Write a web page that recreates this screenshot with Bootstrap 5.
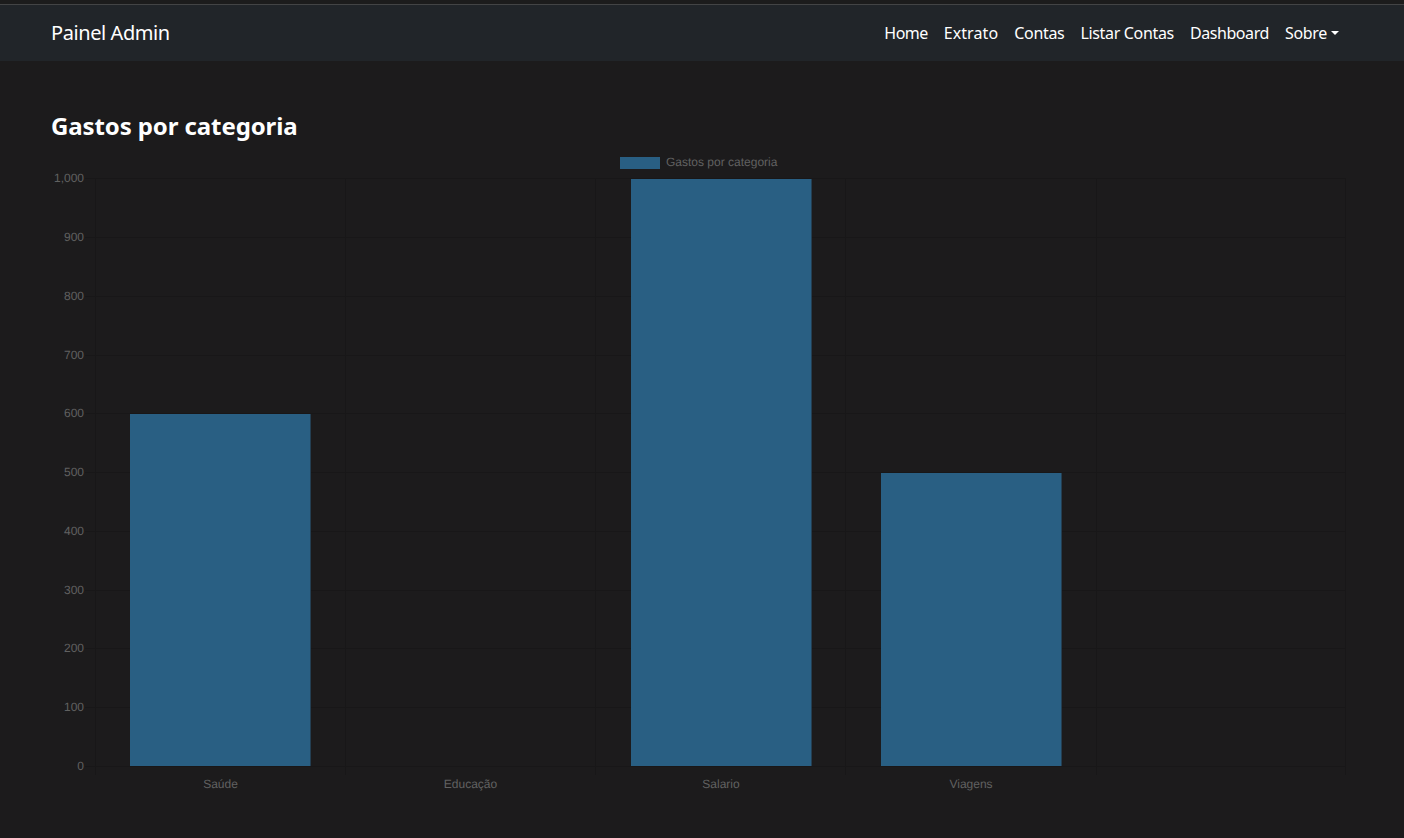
<!DOCTYPE html>
<html lang="pt-BR">
<head>
<meta charset="utf-8">
<title>Painel Admin</title>
<link rel="stylesheet" href="https://cdn.jsdelivr.net/npm/bootstrap@5.3.0/dist/css/bootstrap.min.css">
<style>
html, body { height: 100%; }
body { background: #1c1b1c; font-family: "Noto Sans", sans-serif; overflow: hidden; }
.top-strip { height: 5px; background: #1c1c1c; border-bottom: 1px solid #434445; }
.admin-bar { height: 56px; padding: 0 51px; background: #212529; }
.admin-bar .container-fluid { padding: 0; }
.admin-bar .navbar-brand { font-size: 20px; letter-spacing: -.42px; color: #fff; margin: 0; }
.admin-bar .navbar-nav { margin-right: 6px; }
.admin-bar .nav-link { color: #fff; font-size: 16px; letter-spacing: -.33px; }
.admin-bar .nav-link.tight-label { letter-spacing: -.55px; }
.admin-bar .nav-link.wide-label { letter-spacing: .1px; }
.admin-bar .nav-link.dash-label { letter-spacing: -.42px; }
.page-body { padding: 47px 51px 0; }
.page-title { font-size: 24px; font-weight: 700; letter-spacing: -.1px; color: #fff; line-height: 36px; margin: 0 0 7px; }
.chart-canvas { display: block; width: 1302px; height: 650px; }
.chart-canvas text { font-family: "Liberation Sans", Arial, sans-serif; font-size: 12px; fill: #616161; text-rendering: geometricPrecision; }
.gl { stroke: #181718; stroke-width: 1; shape-rendering: crispEdges; }
.bar { fill: #295f83; shape-rendering: crispEdges; }
.bar-edge { stroke: #243f52; stroke-width: 1; shape-rendering: crispEdges; }
</style>
</head>
<body>
<div class="top-strip"></div>
<nav class="navbar navbar-expand-lg navbar-dark admin-bar">
  <div class="container-fluid">
    <a class="navbar-brand" href="#">Painel Admin</a>
    <ul class="navbar-nav ms-auto">
      <li class="nav-item"><a class="nav-link tight-label" href="#">Home</a></li>
      <li class="nav-item"><a class="nav-link wide-label" href="#">Extrato</a></li>
      <li class="nav-item"><a class="nav-link" href="#">Contas</a></li>
      <li class="nav-item"><a class="nav-link" href="#">Listar Contas</a></li>
      <li class="nav-item"><a class="nav-link dash-label" href="#">Dashboard</a></li>
      <li class="nav-item dropdown"><a class="nav-link dropdown-toggle" href="#" role="button" data-bs-toggle="dropdown">Sobre</a>
        <ul class="dropdown-menu dropdown-menu-end"><li><a class="dropdown-item" href="#">Sobre</a></li></ul>
      </li>
    </ul>
  </div>
</nav>
<main class="page-body">
  <h2 class="page-title">Gastos por categoria</h2>
  <svg class="chart-canvas" viewBox="51 151 1302 650" role="img" aria-label="Gastos por categoria">
    <g class="gl">
      <line x1="85" x2="1346" y1="178.5" y2="178.5"/>
      <line x1="85" x2="1346" y1="237.5" y2="237.5"/>
      <line x1="85" x2="1346" y1="296.5" y2="296.5"/>
      <line x1="85" x2="1346" y1="355.5" y2="355.5"/>
      <line x1="85" x2="1346" y1="413.5" y2="413.5"/>
      <line x1="85" x2="1346" y1="472.5" y2="472.5"/>
      <line x1="85" x2="1346" y1="531.5" y2="531.5"/>
      <line x1="85" x2="1346" y1="590.5" y2="590.5"/>
      <line x1="85" x2="1346" y1="648.5" y2="648.5"/>
      <line x1="85" x2="1346" y1="707.5" y2="707.5"/>
      <line x1="85" x2="1346" y1="766.5" y2="766.5"/>
      <line x1="95.5" x2="95.5" y1="178" y2="775"/>
      <line x1="345.5" x2="345.5" y1="178" y2="775"/>
      <line x1="595.5" x2="595.5" y1="178" y2="775"/>
      <line x1="845.5" x2="845.5" y1="178" y2="775"/>
      <line x1="1096.5" x2="1096.5" y1="178" y2="775"/>
      <line x1="1345.5" x2="1345.5" y1="178" y2="775"/>
    </g>
    <rect class="bar" x="620" y="157" width="40" height="12"/>
    <text x="666" y="166">Gastos por categoria</text>
    <rect class="bar" x="130" y="414" width="180" height="352"/>
    <line class="bar-edge" x1="310.5" x2="310.5" y1="414" y2="766"/>
    <rect class="bar" x="631" y="179" width="180" height="587"/>
    <line class="bar-edge" x1="811.5" x2="811.5" y1="179" y2="766"/>
    <rect class="bar" x="881" y="473" width="180" height="293"/>
    <line class="bar-edge" x1="1061.5" x2="1061.5" y1="473" y2="766"/>
    <g text-anchor="end">
      <text x="84" y="182">1,000</text>
      <text x="84" y="241">900</text>
      <text x="84" y="300">800</text>
      <text x="84" y="359">700</text>
      <text x="84" y="417">600</text>
      <text x="84" y="476">500</text>
      <text x="84" y="535">400</text>
      <text x="84" y="594">300</text>
      <text x="84" y="652">200</text>
      <text x="84" y="711">100</text>
      <text x="84" y="770">0</text>
    </g>
    <g text-anchor="middle">
      <text x="220.5" y="788">Saúde</text>
      <text x="470.5" y="788">Educação</text>
      <text x="721" y="788">Salario</text>
      <text x="971" y="788">Viagens</text>
    </g>
  </svg>
</main>
<script src="https://cdn.jsdelivr.net/npm/bootstrap@5.3.0/dist/js/bootstrap.bundle.min.js"></script>
</body>
</html>
